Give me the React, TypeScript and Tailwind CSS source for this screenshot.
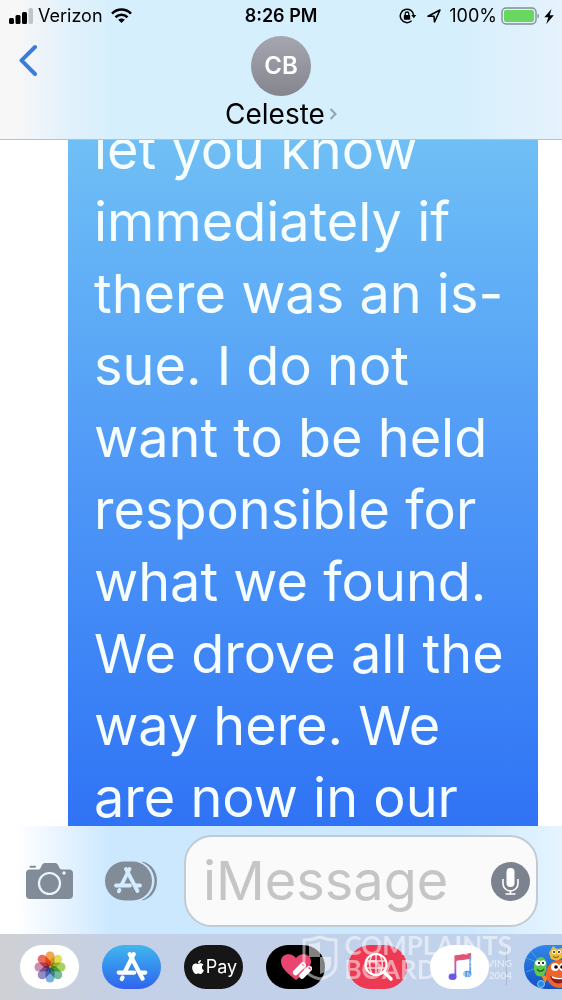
import type { ReactNode } from 'react';
import { FaApple } from 'react-icons/fa';

const MESSAGE_LINES = [
  'let you know',
  'immediately if',
  'there was an is-',
  'sue. I do not',
  'want to be held',
  'responsible for',
  'what we found.',
  'We drove all the',
  'way here. We',
  'are now in our',
];

export default function App() {
  return (
    <div className="relative flex h-screen flex-col overflow-hidden bg-white font-['Inter',sans-serif] text-black">
      <header className="shrink-0 border-b border-[#a9c5d6] bg-[linear-gradient(to_right,#f7f7f8_3%,#e2f1fb_12%,#d6effd_20%,#d6effd_82%,#e6f2fc)]">
        <StatusBar />
        <ContactBar />
      </header>

      <main className="min-h-0 flex-1 overflow-hidden pr-6 pl-[68px]">
        <p className="-mt-[26px] bg-linear-to-b from-[#72c2f5] via-[#4f98f7] to-[#2f72f5] pl-[26px] text-[54px] leading-[72px] whitespace-nowrap text-[#f5fdff]">
          {MESSAGE_LINES.map((line) => (
            <span key={line} className="block">
              {line}
            </span>
          ))}
        </p>
      </main>

      <Composer />
      <AppDrawer />
      <Watermark />
    </div>
  );
}

function StatusBar() {
  return (
    <div className="grid h-8 grid-cols-[1fr_auto_1fr] items-center px-2 text-lg leading-8">
      <div className="flex items-center">
        <svg width="26" height="16" viewBox="0 0 26 16" className="mr-1">
          <rect x="1" y="10" width="5" height="6" rx="1.5" />
          <rect x="7.500" y="7" width="5" height="9" rx="1.5" />
          <rect x="14" y="4" width="5" height="12" rx="1.5" />
          <rect x="20.500" y="0" width="4.500" height="16" rx="1.500" fill="#c2c5c8" />
        </svg>
        <span>Verizon</span>
        <svg width="21" height="16" viewBox="0 0 21 16" className="ml-2" fill="none" stroke="black" strokeWidth="2.6">
          <path d="M1 5.600C6.500 .2 14.500 .2 20 5.600" />
          <path d="M4.500 9.200c3.500-3.300 8.500-3.300 12 0" />
          <path d="M7.200 11.700c2-1.700 4.600-1.700 6.600 0L10.500 15z" fill="black" stroke="none" />
        </svg>
      </div>
      <span className="font-semibold">8:26 PM</span>
      <div className="flex items-center justify-end">
        <svg width="18" height="16" viewBox="0 0 18 16" fill="none" stroke="black" strokeWidth="1.500">
          <path d="M12.600 12.800A6.700 6.700 0 1 1 14.700 7.600" />
          <path d="M12.300 7h5l-2.500 3.300z" fill="black" stroke="none" />
          <rect x="4.800" y="7" width="6.400" height="4.800" rx=".8" fill="black" stroke="none" />
          <path d="M6.200 7.200V5.800a1.800 1.800 0 0 1 3.600 0v1.400" strokeWidth="1.300" />
        </svg>
        <svg width="14" height="14" viewBox="0 0 14 14" className="mr-2 ml-2.5" fill="none" stroke="black" strokeWidth="1.600" strokeLinejoin="round">
          <path d="M1 7.200 13 1 7.500 13 7 7.300z" />
        </svg>
        <span>100%</span>
        <svg width="39" height="18" viewBox="0 0 39 18" className="ml-1">
          <rect x="1" y="1" width="34" height="16" rx="4" fill="none" stroke="#7f8f96" strokeWidth="1.400" />
          <rect x="3" y="3" width="30" height="12" rx="2" fill="#68d65f" />
          <path d="M36.500 6.500c2 1 2 4 0 5z" fill="#7f8f96" />
        </svg>
        <svg width="10" height="15" viewBox="0 0 10 15" className="ml-1">
          <path d="M7.500 0 .3 8.300h3.900L2.300 15 9.800 6.200H5.700z" />
        </svg>
      </div>
    </div>
  );
}

function ContactBar() {
  return (
    <div className="grid h-[107px] grid-cols-[1fr_auto_1fr] items-start">
      <button aria-label="Back" className="mt-3 ml-[18px] w-5">
        <svg width="20" height="32" viewBox="0 0 20 32" fill="none" stroke="#3a7bdc" strokeWidth="4" strokeLinecap="round" strokeLinejoin="round">
          <path d="M17 3 3.500 16.300 17 30" />
        </svg>
      </button>
      <button className="mt-1 flex flex-col items-center">
        <span className="flex size-[60px] items-center justify-center rounded-full bg-linear-to-b from-[#a5a6b0] to-[#85858e] text-2xl font-semibold text-white">
          CB
        </span>
        <span className="flex items-center gap-1 text-[28px] leading-9">
          Celeste
          <svg width="8" height="12" viewBox="0 0 8 12" fill="none" stroke="#8fa3ae" strokeWidth="2">
            <path d="m1.500 1 5 5-5 5" />
          </svg>
        </span>
      </button>
    </div>
  );
}

function Composer() {
  return (
    <div className="flex h-[108px] shrink-0 items-center gap-[26px] bg-[linear-gradient(to_right,white_3%,#e4f2ff_12%,#cbe8ff_20%,#cbe8ff_82%,#e6f4ff)] pt-0.5 pr-6 pl-[25px]">
      <button aria-label="Camera">
        <svg width="49" height="38" viewBox="0 0 49 38">
          <path
            d="M5 7.500h8.500c3 0 2.500-6.500 6.500-6.500h10c4 0 3.500 6 6.500 6.500h7.500a4 4 0 0 1 4 4v21.500a4 4 0 0 1-4 4H5a4 4 0 0 1-4-4V11.500a4 4 0 0 1 4-4z"
            fill="#828c99"
          />
          <path d="M5.500 4.800h4.500" stroke="#828c99" strokeWidth="2" strokeLinecap="round" />
          <circle cx="24.500" cy="21.500" r="10.500" fill="none" stroke="#eaf6ff" strokeWidth="2.200" />
          <circle cx="39" cy="11" r="1.700" fill="#eaf6ff" />
        </svg>
      </button>
      <button aria-label="Apps" className="ml-1">
        <svg width="54" height="40" viewBox="0 0 54 40">
          <path d="M38 .5c20 4 20 35 0 39z" fill="#828c99" />
          <rect x="1" y="-.5" width="49.500" height="41" rx="20.500" fill="#cbe8ff" />
          <rect x="1" y=".5" width="47" height="39" rx="19.500" fill="#828c99" />
          <g transform="translate(10 6)">
            <StoreMark color="#d3ecff" />
          </g>
        </svg>
      </button>
      <div className="flex h-[92px] min-w-0 flex-1 items-center rounded-[28px] border-2 border-[#c3cad0] bg-[#fafafa] pr-1.5 pl-[17px]">
        <input
          aria-label="iMessage"
          placeholder="iMessage"
          className="w-0 min-w-0 flex-1 bg-transparent text-[54px] leading-[72px] outline-none placeholder:text-[#c5c5c7]"
        />
        <button aria-label="Record audio">
          <svg width="39" height="39" viewBox="0 0 39 39">
            <circle cx="19.500" cy="19.500" r="19.500" fill="#7d838e" />
            <rect x="15.500" y="6" width="8" height="19" rx="4" fill="white" />
            <path d="M12 17v4.500a7.500 7.500 0 0 0 15 0V17M19.500 29v3M14.500 32h10" fill="none" stroke="white" strokeWidth="1.600" />
          </svg>
        </button>
      </div>
    </div>
  );
}

function AppDrawer() {
  return (
    <nav className="flex h-[66px] shrink-0 items-center gap-[23px] overflow-hidden bg-linear-to-r from-[#cfd0d5] via-[#c3d0e8] via-25% to-[#c0d3ec] pl-5">
      <Pill label="Photos" className="bg-white">
        <svg width="34" height="34" viewBox="-17 -17 34 34">
          {PETALS.map((color, i) => (
            <rect key={color} x="-4.500" y="-15.500" width="9" height="15" rx="4.500" fill={color} fillOpacity=".9" transform={`rotate(${i * 45})`} className="mix-blend-multiply" />
          ))}
        </svg>
      </Pill>
      <Pill label="App Store" className="bg-linear-to-b from-[#43b6ee] to-[#3162ec]">
        <svg width="32" height="30" viewBox="0 0 28 27">
          <StoreMark color="white" />
        </svg>
      </Pill>
      <Pill label="Apple Pay" className="bg-[#161617] text-lg text-white">
        <FaApple size={16} />
        Pay
      </Pill>
      <Pill label="Digital Touch" className="bg-black">
        <svg width="32" height="30" viewBox="0 0 32 30">
          <path d="M16 28C7 21 1 16 1 9.500 1 1 12 0 16 6c4-6 15-5 15 3.500C31 16 25 21 16 28z" fill="#e94570" />
          <g transform="rotate(45 22 18)" fill="white">
            <rect x="16.500" y="11" width="5.500" height="16" rx="2.700" />
            <rect x="23.500" y="9" width="5.500" height="16" rx="2.700" />
            <path d="M18 13.500h2.500M25 11.500h2.500" stroke="#e94570" strokeWidth="1.500" />
          </g>
        </svg>
      </Pill>
      <Pill label="Images" className="bg-[#ec3a55]">
        <svg width="32" height="30" viewBox="0 0 32 30" fill="none" stroke="white" strokeWidth="1.500">
          <circle cx="14" cy="12.500" r="10.500" strokeWidth="2.200" />
          <path d="M14 2v21M3.500 9h21M3.500 16h21M10 3c-3 6-3 13 0 19M18 3c3 6 3 13 0 19" strokeOpacity=".8" />
          <path d="m22 20 7 7" strokeWidth="3.500" strokeLinecap="round" />
        </svg>
      </Pill>
      <Pill label="Music" className="bg-white">
        <svg width="26" height="30" viewBox="0 0 28 32">
          <defs>
            <linearGradient id="note" x1="0" y1="0" x2="0" y2="1">
              <stop offset="0" stopColor="#e84c66" />
              <stop offset=".35" stopColor="#dc5885" />
              <stop offset=".65" stopColor="#a367d8" />
              <stop offset="1" stopColor="#6a56e8" />
            </linearGradient>
          </defs>
          <path d="M8 3.500 26 1v6L10 9.500V26H8z" fill="url(#note)" />
          <ellipse cx="6" cy="26.500" rx="4.300" ry="3.500" fill="#6b57e8" />
          <path d="M24 4h2v19h-2z" fill="#65a4df" />
          <ellipse cx="22" cy="23.500" rx="4.300" ry="3.500" fill="#4f9be6" />
        </svg>
      </Pill>
      <span className="-mx-1.5 h-9 w-px shrink-0 bg-[#abb9cd]" />
      <Pill label="Fish game" className="bg-linear-to-b from-[#3187e8] to-[#1550c6]">
        <svg width="59" height="44" viewBox="0 0 59 44" className="shrink-0">
          <path d="m0 12 13 5M5 4l10 12M2 27l10-4" stroke="#68b7f5" strokeOpacity=".6" />
          <circle cx="17" cy="39" r="3.500" fill="#2989e9" stroke="#7fcdf7" />
          <path d="m25 8 4-7 4 3 5-1 1 9-6 4-6-2z" fill="#edbc35" />
          <circle cx="30" cy="7" r="2" fill="white" />
          <circle cx="35" cy="7" r="2" fill="white" />
          <circle cx="30" cy="7" r=".9" />
          <circle cx="35" cy="7" r=".9" />
          <path d="M29 11c2 2 4 2 6 0" fill="none" stroke="#8a4b13" />
          <path d="M11 27c-3-5 0-15 6-15 7 0 7 13 3 18-4 3-9 1-9-3z" fill="#61c84e" />
          <circle cx="14" cy="18" r="2.800" fill="white" />
          <circle cx="19" cy="18" r="2.800" fill="white" />
          <circle cx="15" cy="18" r="1.100" />
          <circle cx="19" cy="18" r="1.100" />
          <path d="M13 24c2 3 5 3 7 0" fill="none" stroke="#1c6f2d" strokeWidth="1.500" />
          <path d="m17 30 8 1-4 7z" fill="#f08a2c" />
          <circle cx="36" cy="29" r="14" fill="#ed642d" />
          <circle cx="31" cy="22" r="4" fill="white" />
          <circle cx="39" cy="22" r="4" fill="white" />
          <circle cx="32" cy="22" r="1.800" />
          <circle cx="38" cy="22" r="1.800" />
          <path d="M26 31c5 3 13 3 18-1-2 10-15 12-18 1z" fill="#8b1d20" />
          <path d="M28 32c4 2 10 2 14 0" fill="none" stroke="white" strokeWidth="1.500" />
        </svg>
      </Pill>
    </nav>
  );
}

const PETALS = ['#f29a38', '#dedb48', '#9fcb50', '#66b494', '#6aa5dc', '#8b80bf', '#c47fad', '#e95c4b'];

function Pill({ label, className, children }: { label: string; className: string; children: ReactNode }) {
  return (
    <button
      aria-label={label}
      className={`flex h-11 w-[59px] shrink-0 items-center justify-center overflow-hidden rounded-full ${className}`}
    >
      {children}
    </button>
  );
}

// The three crossed sticks, in a 28x27 box
function StoreMark({ color }: { color: string }) {
  return (
    <g fill="none" stroke={color} strokeWidth="3.800" strokeLinecap="round">
      <path d="M15.500 2 7.500 18" />
      <path d="M12 2 23.500 24" />
      <path d="M2 18.500h14M21.500 18.500H26" />
      <path d="m5.500 23-.7 1.300" />
    </g>
  );
}

function Watermark() {
  return (
    <div className="pointer-events-none absolute right-[50px] bottom-[19px] flex items-center gap-1.5 font-['Lato',sans-serif] text-white/50">
      <svg width="36" height="46" viewBox="0 0 36 46">
        <path d="M2 5c6 0 11-1 16-3 5 2 10 3 16 3v24c0 8-7 13-16 15C9 42 2 37 2 29z" fill="none" stroke="currentColor" strokeWidth="3" />
        <path d="M18 7v15H7V9c4 0 8-1 11-2zM18 22h11v7c0 5-5 8-11 10z" fill="currentColor" />
      </svg>
      <div className="text-[26px] leading-[23px] font-bold">
        <div>COMPLAINTS</div>
        <div className="flex items-center justify-between">
          BOARD
          <span className="text-right text-[10px] leading-3">
            RESOLVING
            <br />
            SINCE 2004
          </span>
        </div>
      </div>
    </div>
  );
}
